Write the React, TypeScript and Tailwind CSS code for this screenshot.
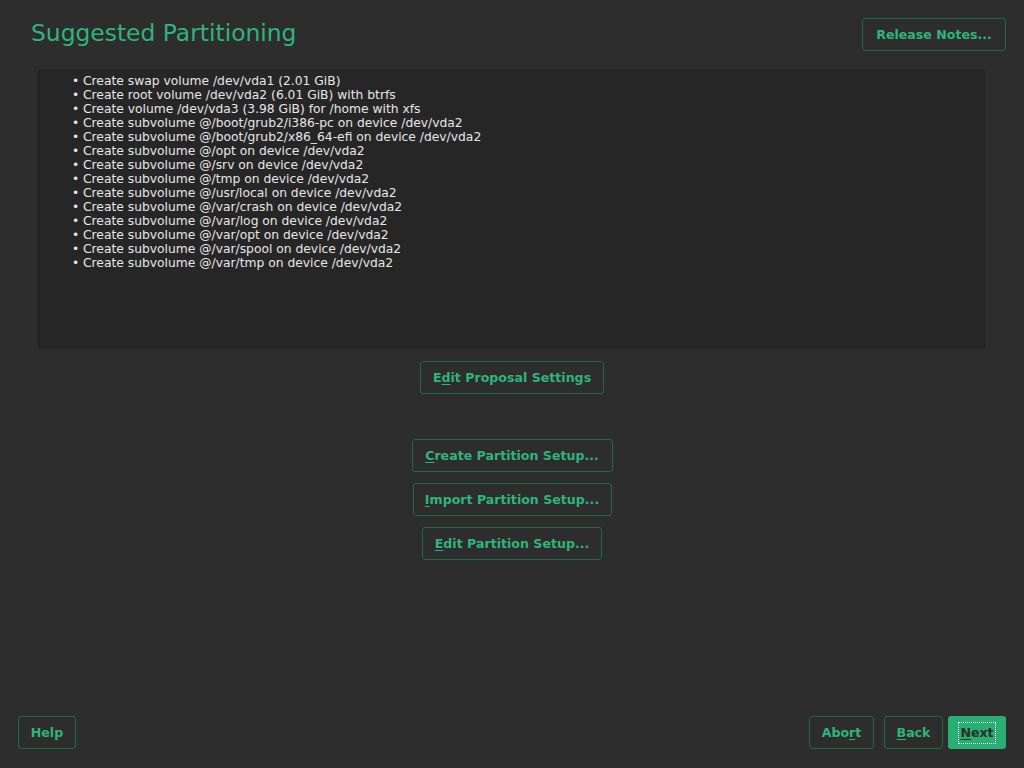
import React from 'react'

const lines = [
	'Create swap volume /dev/vda1 (2.01 GiB)',
	'Create root volume /dev/vda2 (6.01 GiB) with btrfs',
	'Create volume /dev/vda3 (3.98 GiB) for /home with xfs',
	'Create subvolume @/boot/grub2/i386-pc on device /dev/vda2',
	'Create subvolume @/boot/grub2/x86_64-efi on device /dev/vda2',
	'Create subvolume @/opt on device /dev/vda2',
	'Create subvolume @/srv on device /dev/vda2',
	'Create subvolume @/tmp on device /dev/vda2',
	'Create subvolume @/usr/local on device /dev/vda2',
	'Create subvolume @/var/crash on device /dev/vda2',
	'Create subvolume @/var/log on device /dev/vda2',
	'Create subvolume @/var/opt on device /dev/vda2',
	'Create subvolume @/var/spool on device /dev/vda2',
	'Create subvolume @/var/tmp on device /dev/vda2',
]

function Btn({ className, children }: { className: string; children: React.ReactNode }) {
	return (
		<button
			className={
				'h-[33px] rounded-[3px] border border-[#1c6a48] bg-[#2d2d2d] pt-px text-[12.6px] font-bold text-[#2fb47b] flex items-center justify-center ' +
				className
			}
		>
			{children}
		</button>
	)
}

export default function App() {
	return (
		<div
			className="h-screen w-full bg-[#2d2d2d] flex flex-col"
			style={{ fontFamily: '"DejaVu Sans", Verdana, sans-serif' }}
		>
			{/* Header */}
			<div className="flex items-start justify-between pl-[31px] pr-[18px] pt-[18px]">
				<h1 className="text-[23.4px] leading-[28px] text-[#2fb47b] mt-px">Suggested Partitioning</h1>
				<Btn className="w-[144px]">Release Notes...</Btn>
			</div>

			{/* Summary */}
			<div className="mt-[19px] ml-[38px] mr-[39px] h-[279px] rounded-[3px] border border-[#1f1f1f] border-r-[#232323] border-b-[#2a2a2a] bg-[#262626] pt-[3px] pl-[33px]">
				<ul className="text-[12.3px] leading-[14px] text-[#e6e6e6]">
					{lines.map((l, i) => (
						<li key={i} className="flex">
							<span className="w-[11px]">•</span>
							<span>{l}</span>
						</li>
					))}
				</ul>
			</div>

			<div className="flex flex-col items-center">
				<Btn className="mt-[12px] w-[184px]">
					<span>
						E<u className="underline-offset-2">d</u>it Proposal Settings
					</span>
				</Btn>
				<Btn className="mt-[45px] w-[201px]">
					<span>
						<u className="underline-offset-2">C</u>reate Partition Setup...
					</span>
				</Btn>
				<Btn className="mt-[11px] w-[199px]">
					<span>
						<u className="underline-offset-2">I</u>mport Partition Setup...
					</span>
				</Btn>
				<Btn className="mt-[11px] w-[180px]">
					<span>
						<u className="underline-offset-2">E</u>dit Partition Setup...
					</span>
				</Btn>
			</div>

			<div className="flex-1" />

			{/* Footer */}
			<div className="flex items-center justify-between px-[18px] pb-[19px]">
				<Btn className="w-[58px]">Help</Btn>
				<div className="flex items-center">
					<Btn className="w-[65px]">
						<span>
							Abo<u className="underline-offset-2">r</u>t
						</span>
					</Btn>
					<Btn className="ml-[10px] w-[59px]">
						<span>
							<u className="underline-offset-2">B</u>ack
						</span>
					</Btn>
					<button className="ml-[5px] h-[33px] w-[58px] rounded-[3px] bg-[#29af73] text-[12.6px] font-bold text-[#2d2d2d] flex items-center justify-center">
						<span className="border border-dotted border-white px-px leading-[20px]">
							<u className="underline-offset-2">N</u>ext
						</span>
					</button>
				</div>
			</div>
		</div>
	)
}
